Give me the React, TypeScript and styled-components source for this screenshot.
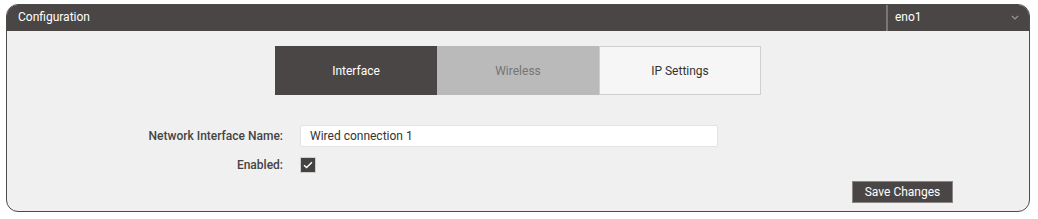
import React, { useState } from 'react';
import styled, { createGlobalStyle } from 'styled-components';

const GlobalStyle = createGlobalStyle`
    body {
        margin: 0;
        background: #ffffff;
        font-family: Roboto, "Liberation Sans", sans-serif;
    }
`;

const Panel = styled.div`
    margin: 4px 0 0 6px;
    width: 1022px;
    height: 206px;
    border: 1px solid #4d4a4a;
    border-radius: 12px;
    overflow: hidden;
    background: #f0f0f0;
    display: flex;
    flex-direction: column;
`;

const Header = styled.div`
    height: 26px;
    background: #4a4646;
    display: flex;
    align-items: stretch;
    color: #ffffff;
    font-size: 12px;
`;

const Title = styled.div`
    flex: 1;
    display: flex;
    align-items: center;
    padding-left: 11px;
    padding-bottom: 2px;
`;

const DeviceSelect = styled.div`
    box-sizing: border-box;
    width: 143px;
    border-left: 2px solid #7a7676;
    display: flex;
    align-items: center;
    justify-content: space-between;
    padding: 0 10px 2px 7px;
`;

const Body = styled.div`
    flex: 1;
    display: flex;
    flex-direction: column;
    padding-top: 15px;
`;

const Tabs = styled.div`
    align-self: center;
    display: flex;
    height: 49px;
`;

const Tab = styled.button<{ $state: 'active' | 'disabled' | 'idle' }>`
    width: 162px;
    height: 49px;
    font-family: inherit;
    font-size: 12px;
    border: 1px solid
        ${p => (p.$state === 'idle' ? '#cfcfcf' : 'transparent')};
    background: ${p =>
        p.$state === 'active' ? '#4a4646' : p.$state === 'disabled' ? '#bababa' : '#f6f6f6'};
    color: ${p =>
        p.$state === 'active' ? '#ffffff' : p.$state === 'disabled' ? '#757575' : '#333333'};
    cursor: pointer;
    padding: 0;
`;

const Form = styled.div`
    display: grid;
    grid-template-columns: 276px 418px;
    column-gap: 17px;
    row-gap: 10px;
    margin-top: 30px;
    align-items: center;
`;

const Label = styled.label`
    text-align: right;
    font-size: 12px;
    font-weight: 500;
    color: #444444;
`;

const TextInput = styled.input`
    box-sizing: border-box;
    height: 22px;
    width: 418px;
    border: 1px solid #e2e2e2;
    border-radius: 2px;
    background: #ffffff;
    font-family: inherit;
    font-size: 12px;
    color: #333333;
    padding: 0 9px;
    outline: none;
`;

const CheckBox = styled.span`
    width: 16px;
    height: 16px;
    box-sizing: border-box;
    background: #464242;
    border: 1px solid #cfcfcf;
    display: flex;
    align-items: center;
    justify-content: center;
`;

const Footer = styled.div`
    display: flex;
    justify-content: flex-end;
    padding-right: 76px;
    margin-top: 8px;
`;

const SaveButton = styled.button`
    width: 101px;
    height: 22px;
    background: #4a4646;
    border: 1px solid #8a8686;
    color: #ffffff;
    font-family: inherit;
    font-size: 12px;
    padding: 0;
    cursor: pointer;
`;

export default function App() {
    const [tab, setTab] = useState('interface');
    const [name, setName] = useState('Wired connection 1');

    return <>
        <GlobalStyle />
        <Panel>
            <Header>
                <Title>Configuration</Title>
                <DeviceSelect>
                    <span>eno1</span>
                    <svg width="8" height="5" viewBox="0 0 8 5">
                        <path d="M1 1l3 3 3-3" stroke="#9a9696" strokeWidth="1.2" fill="none" />
                    </svg>
                </DeviceSelect>
            </Header>
            <Body>
                <Tabs>
                    <Tab $state={tab === 'interface' ? 'active' : 'idle'} onClick={() => setTab('interface')}>Interface</Tab>
                    <Tab $state="disabled">Wireless</Tab>
                    <Tab $state={tab === 'ip' ? 'active' : 'idle'} onClick={() => setTab('ip')}>IP Settings</Tab>
                </Tabs>
                <Form>
                    <Label>Network Interface Name:</Label>
                    <TextInput value={name} onChange={e => setName(e.target.value)} />
                    <Label>Enabled:</Label>
                    <CheckBox>
                        <svg width="10" height="8" viewBox="0 0 10 8">
                            <path d="M1 4.2l2.6 2.4L9 1.2" stroke="#ffffff" strokeWidth="1.4" fill="none" />
                        </svg>
                    </CheckBox>
                </Form>
                <Footer>
                    <SaveButton>Save Changes</SaveButton>
                </Footer>
            </Body>
        </Panel>
    </>;
}
